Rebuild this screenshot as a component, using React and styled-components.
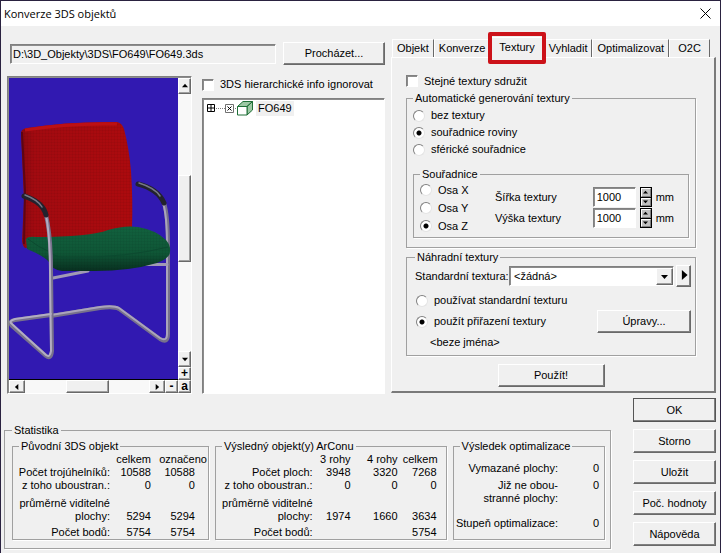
import React, { useState } from 'react';
import styled, { createGlobalStyle, css } from 'styled-components';

const GlobalStyle = createGlobalStyle`
  * {
    box-sizing: border-box;
  }

  body {
    margin: 0;
    background: #f0f0f0;
    color: #000;
    font: 11px/13px "Liberation Sans", Arial, sans-serif;
  }

  button,
  input,
  select {
    margin: 0;
    padding: 0;
    border-radius: 0;
    color: inherit;
    font: inherit;
  }
`;

const sunken = css`
  border: 1px solid;
  border-color: #808080 #fff #fff #808080;
  box-shadow: inset 1px 1px 0 #8c8c8c;
`;

const raised = css`
  border: 1px solid;
  border-color: #fff #696969 #696969 #fff;
  box-shadow: inset -1px -1px 0 #a0a0a0;
  background: #f0f0f0;
`;

const Window = styled.div`
  display: flex;
  flex-direction: column;
  min-height: 100vh;
  border: solid #2a2240;
  border-width: 1px 1px 0;
`;

const TitleBar = styled.header`
  display: flex;
  align-items: center;
  justify-content: space-between;
  height: 25px;
  padding: 0 8px 0 3px;
  background: #fff;
`;

const Title = styled.h1`
  margin: 0;
  font: 11px/16px "Open Sans", "Segoe UI", sans-serif;
`;

const CloseButton = styled.button`
  display: flex;
  border: none;
  background: none;
`;

const Body = styled.div`
  padding: 0 4px 0 3px;
`;

const Main = styled.main`
  display: flex;
  gap: 6px;
  padding: 13px 0 0 3px;
`;

const Source = styled.section`
  display: flex;
  flex: 1;
  flex-direction: column;
  gap: 11px;
  min-width: 0;
  padding-top: 3px;
`;

const FileRow = styled.div`
  display: flex;
  align-items: center;
  gap: 7px;
  padding-left: 3px;
`;

const PathInput = styled.input`
  ${sunken}
  flex: 1;
  min-width: 0;
  height: 20px;
  padding-left: 2px;
  background: #f0f0f0;
`;

const Button = styled.button`
  ${raised}
  width: ${({ $width }) => $width || 'auto'};
  height: ${({ $height }) => $height || 23}px;
  box-shadow: inset -1px -1px 0 #808080;
  outline: ${({ $primary }) => ($primary ? '1px solid #555' : 'none')};
  outline-offset: -1px;
`;

const SourceColumns = styled.div`
  display: flex;
  flex: 1;
  gap: 10px;
`;

const Preview = styled.div`
  ${sunken}
  display: grid;
  grid-template-rows: 1fr 13px;
  grid-template-columns: 1fr 13px;
  width: 185px;
  padding: 1px 0 0 1px;
  background: #f8f8f8;
`;

const Scene = styled.svg`
  width: 100%;
  height: 100%;
  border-bottom: 1px solid #000;
  background: #3119b1;
`;

const ScrollBar = styled.div`
  display: flex;
  flex-direction: ${({ $vertical }) => ($vertical ? 'column' : 'row')};
  background: #f8f8f8;
`;

const ScrollButton = styled.button`
  ${raised}
  display: flex;
  flex: 0 0 ${({ $size }) => $size}px;
  align-items: center;
  justify-content: center;
  min-height: 0;
  font-weight: bold;
  font-size: 12px;
  line-height: 9px;
`;

const ScrollThumb = styled.div`
  ${raised}
  flex: 0 0 ${({ $size }) => $size}px;
`;

const ScrollSpace = styled.div`
  flex: ${({ $share }) => $share || 1};
`;

const TreeColumn = styled.div`
  display: flex;
  flex: 1;
  flex-direction: column;
  gap: 5px;
`;

const CheckLabel = styled.label`
  display: flex;
  align-items: center;
  gap: 6px;
  height: ${({ $height }) => $height || 17}px;
`;

const CheckInput = styled.input`
  ${sunken}
  width: 12px;
  height: 12px;
  appearance: none;
  background: #fff;

  &:checked {
    background: #404040;
  }
`;

const Tree = styled.div`
  ${sunken}
  flex: 1;
  padding: 1px 4px;
  background: #fff;
`;

const TreeRow = styled.div`
  display: flex;
  align-items: center;
  height: 16px;
`;

const TreeText = styled.span`
  margin-left: 3px;
  padding: 1px 2px;
  background: #f0f0f0;
`;

const Settings = styled.section`
  flex: 0 0 325px;
  min-width: 0;
`;

const TabList = styled.div`
  display: flex;
  height: 18px;
  padding-left: 1px;
`;

const Tab = styled.button`
  position: relative;
  min-width: 41px;
  padding: 0 4px;
  border: 1px solid;
  border-color: #fff #696969 transparent #fff;
  border-bottom: none;
  background: #f0f0f0;
  white-space: nowrap;

  ${({ $active }) => $active
    && css`
      z-index: 1;
      margin: -2px 0 -1px;
      padding: 0 8px 2px;
    `}
`;

const TabMarker = styled.span`
  position: absolute;
  inset: -6px -3px -6px -3px;
  border: 4px solid #cc1219;
  border-radius: 2px;
`;

const TabPanel = styled.div`
  display: flex;
  flex-direction: column;
  padding: 15px 18px 4px 14px;
  border: solid;
  border-width: 1px 2px 2px 1px;
  border-color: #fff #7a7a7a #7a7a7a #fff;
`;

const Group = styled.fieldset`
  min-width: 0;
  margin: 0;
  padding: ${({ $padding }) => $padding || 0};
  border: 1px solid #a0a0a0;
  box-shadow: 1px 1px 0 #fff;
`;

const Legend = styled.legend`
  margin-left: ${({ $indent }) => $indent || 0}px;
  padding: 0 2px;
`;

const PanelGroup = styled(Group)`
  margin-top: 3px;
`;

const AxisGroup = styled(Group)`
  display: flex;
  margin-top: 10px;
`;

const RadioLabel = styled.label`
  display: flex;
  align-items: center;
  gap: 6px;
  height: ${({ $height }) => $height || 17}px;
`;

const RadioInput = styled.input`
  width: 12px;
  height: 12px;
  border: 1px solid;
  border-color: #808080 #e4e4e4 #e4e4e4 #808080;
  border-radius: 50%;
  appearance: none;
  background: #fff;

  &:checked {
    background: radial-gradient(circle, #000 2px, #fff 3px);
  }
`;

const AxisRadios = styled.div`
  width: 75px;
`;

const Sizes = styled.div`
  display: flex;
  flex: 1;
  flex-direction: column;
  gap: 1px;
  padding-top: 6px;
`;

const SizeRow = styled.div`
  display: flex;
  align-items: center;
  gap: 4px;
  height: 20px;
`;

const SizeLabel = styled.label`
  flex: 1;
`;

const SizeInput = styled.input`
  ${sunken}
  width: 43px;
  height: 20px;
  padding-left: 3px;
  background: #fff;
`;

const Spinner = styled.div`
  display: flex;
  flex-direction: column;
  width: 12px;
  height: 20px;
  border: 1px solid #000;
  background: #000;
  gap: 1px;
`;

const SpinButton = styled.button`
  display: flex;
  flex: 1;
  align-items: center;
  justify-content: center;
  min-height: 0;
  border: 1px solid;
  border-color: #fff #808080 #808080 #fff;
  background: #c0c0c0;
`;

const TextureRow = styled.div`
  display: flex;
  align-items: center;
  gap: 2px;
  height: 22px;
`;

const TextureLabel = styled.label`
  width: 92px;
  white-space: nowrap;
`;

const SelectBox = styled.div`
  display: grid;
  flex: 1;
  height: 20px;
`;

const Select = styled.select`
  ${sunken}
  grid-area: 1 / 1;
  width: 100%;
  padding: 0 4px;
  appearance: none;
  background: #fff;
`;

const SelectArrow = styled.span`
  ${raised}
  display: flex;
  grid-area: 1 / 1;
  align-items: center;
  justify-content: center;
  justify-self: end;
  width: 17px;
  margin: 2px 1px 1px;
  pointer-events: none;
`;

const ReplaceOptions = styled.div`
  padding: 5px 0 0 1px;
`;

const AssignRow = styled.div`
  display: flex;
  align-items: center;
  justify-content: space-between;
  margin-top: 1px;
`;

const TextureName = styled.p`
  margin: 3px 0 0 14px;
`;

const ApplyRow = styled.div`
  display: flex;
  justify-content: center;
  padding-top: 8px;
`;

const Footer = styled.footer`
  display: flex;
  align-items: flex-start;
  gap: 22px;
  padding-top: 4px;
`;

const Statistics = styled(Group)`
  display: flex;
  flex: 1;
  gap: 6px;
  margin-top: 26px;
`;

const StatGroup = styled(Group)`
  flex: ${({ $grow }) => $grow} 1 0;
`;

const StatTable = styled.table`
  width: 100%;
  border-collapse: collapse;
  table-layout: fixed;
  text-align: right;

  th,
  td {
    height: 13px;
    padding: 0;
    font-weight: normal;
    white-space: nowrap;
  }
`;

const StatCol = styled.col`
  width: ${({ $width }) => $width}px;
`;

const StatRow = styled.tr`
  th,
  td {
    padding-top: ${({ $gap }) => $gap || 0}px;
    vertical-align: ${({ $top }) => ($top ? 'top' : 'bottom')};
  }

  td:last-child {
    padding-right: ${({ $end }) => $end || 0}px;
  }
`;

const Actions = styled.div`
  display: flex;
  flex: 0 0 83px;
  flex-direction: column;
  gap: 7px;
`;

const Arrow = ({ dir, size = 7 }) => {
  const points = {
    up: '0,5 3.5,1 7,5',
    down: '0,2 3.5,6 7,2',
    left: '5,0 1,3.5 5,7',
    right: '2,0 6,3.5 2,7',
  };

  return (
    <svg width={size} height={size} viewBox="0 0 7 7" aria-hidden="true">
      <polygon points={points[dir]} />
    </svg>
  );
};

const Chair = () => (
  <Scene viewBox="9 77 169 301" preserveAspectRatio="xMidYMid slice" role="img" aria-label="FO649">
    <defs>
      <linearGradient id="back" x1="0" y1="0" x2="1" y2="0">
        <stop offset="0" stopColor="#8c0810" />
        <stop offset="0.12" stopColor="#a20a10" />
        <stop offset="1" stopColor="#ac0a0e" />
      </linearGradient>
      <linearGradient id="seat" x1="0" y1="0" x2="0" y2="1">
        <stop offset="0" stopColor="#12613e" />
        <stop offset="0.6" stopColor="#0f5636" />
        <stop offset="1" stopColor="#083020" />
      </linearGradient>
      <pattern id="weave" width="3" height="3" patternUnits="userSpaceOnUse">
        <path d="M0 .5H3M.5 0V3" stroke="#000" strokeOpacity=".04" />
      </pattern>
    </defs>
    <g fill="none" strokeLinecap="round" strokeLinejoin="round">
      <path d="M51 315L100 307Q114 305 119 308L160 338Q168 343 168 333V245Q168 214 164 202" stroke="#77718c" strokeWidth="4" />
      <path d="M51 314L100 306Q114 304 119 307L160 337Q167 341 167 333V245Q167 214 163 202" stroke="#aaa4bb" strokeWidth="2" />
      <path d="M53 277L88 270M140 263.5H167" stroke="#a09ab4" strokeWidth="3" />
      <path d="M138 183Q158 188 164 202" stroke="#22222d" strokeWidth="5" />
      <path d="M139 182Q155 187 160 195" stroke="#777886" strokeWidth="1.5" />
    </g>
    <path d="M21 132Q21 128 27 127Q70 120 117 121Q122 122 124 128Q129 147 131 170Q133 200 132 227L95 238L25 247Q22 244 22 239L24 200Z" fill="url(#back)" />
    <path d="M21 132Q21 128 27 127Q70 120 117 121Q122 122 124 128Q129 147 131 170Q133 200 132 227L95 238L25 247Q22 244 22 239L24 200Z" fill="url(#weave)" />
    <path d="M22 131L25 190L24 243" fill="none" stroke="#5c0614" strokeWidth="2" />
    <path d="M25 129Q70 122 117 123" fill="none" stroke="#bc1014" strokeWidth="3" />
    <path d="M26 238Q28 235 36 236Q90 236 108 229Q125 224 138 226Q156 229 166 239Q171 245 170 251Q170 257 157 262Q130 270 95 270L62 270Q52 269 49 261Q44 255 27 248Z" fill="url(#seat)" />
    <path d="M26 238Q28 235 36 236Q90 236 108 229Q125 224 138 226Q156 229 166 239Q171 245 170 251Q170 257 157 262Q130 270 95 270L62 270Q52 269 49 261Q44 255 27 248Z" fill="url(#weave)" />
    <path d="M28 238Q38 246 50 251Q56 257 70 257Q130 256 168 246" fill="none" stroke="#0c4a30" />
    <g fill="none" strokeLinecap="round" strokeLinejoin="round">
      <path d="M46 214Q51 235 51 270L52 350Q51 359 46 355L12 325Q8 320 15 319L51 314" stroke="#77718c" strokeWidth="4" />
      <path d="M46 214Q50 235 50 270L51 350Q50 357 46 354L12 323Q8 320 15 318L51 313" stroke="#b2adc2" strokeWidth="2" />
      <path d="M24 195Q43 201 46 214" stroke="#22222d" strokeWidth="5" />
      <path d="M25 194Q38 199 42 206" stroke="#777886" strokeWidth="1.5" />
    </g>
  </Scene>
);

const TreeIcons = () => (
  <svg width="46" height="16" viewBox="0 0 46 16" fill="none" stroke="#000" aria-hidden="true">
    <path d="M.5 4.5h7v7h-7zM1 8h6M4 5v6" />
    <path d="M9 8.5H18M28 8.5H31" strokeDasharray="1 1" stroke="#808080" />
    <path d="M18.5 4.5h8v8h-8z" stroke="#707070" />
    <path d="M20.5 6.5l4 4M24.5 6.5l-4 4" />
    <path d="M30.5 6.500L36 1.5H45.5L40 6.5zM40 6.5L45.5 1.5V10L40 15z" fill="#9cc8a4" stroke="#1f6f37" />
    <path d="M30.5 6.5H40V15H30.5z" fill="#fff" stroke="#1f6f37" />
  </svg>
);

const Radio = ({ name, label, value, selected, onChange, height }) => (
  <RadioLabel $height={height}>
    <RadioInput
      type="radio"
      name={name}
      checked={selected === value}
      onChange={() => onChange(value)}
    />
    {label}
  </RadioLabel>
);

const SizeField = ({ id, label }) => {
  const [value, setValue] = useState(1000);

  return (
    <SizeRow>
      <SizeLabel htmlFor={id}>{label}</SizeLabel>
      <SizeInput id={id} value={value} onChange={(e) => setValue(Number(e.target.value) || 0)} />
      <Spinner>
        <SpinButton type="button" aria-label="+" onClick={() => setValue(value + 1)}>
          <Arrow dir="up" size={5} />
        </SpinButton>
        <SpinButton type="button" aria-label="-" onClick={() => setValue(value - 1)}>
          <Arrow dir="down" size={5} />
        </SpinButton>
      </Spinner>
      <span>mm</span>
    </SizeRow>
  );
};

const tabs = ['Objekt', 'Konverze', 'Textury', 'Vyhladit', 'Optimalizovat', 'O2C'];

const generation = ['bez textury', 'souřadnice roviny', 'sférické souřadnice'];

const axes = ['Osa X', 'Osa Y', 'Osa Z'];

const actions = ['OK', 'Storno', 'Uložit', 'Poč. hodnoty', 'Nápověda'];

const stats = [
  {
    title: 'Původní 3DS objekt',
    grow: 197,
    cols: [41, 57],
    head: ['celkem', 'označeno'],
    headEnd: 1,
    end: 13,
    rows: [
      { label: 'Počet trojúhelníků:', values: ['10588', '10588'] },
      { label: 'z toho uboustran.:', values: ['0', '0'] },
      { label: 'průměrně viditelné', values: ['', ''], gap: 5 },
      { label: 'plochy:', values: ['5294', '5294'] },
      { label: 'Počet bodů:', values: ['5754', '5754'], gap: 3 },
    ],
  },
  {
    title: 'Výsledný objekt(y) ArConu',
    grow: 232,
    cols: [38, 47, 48],
    head: ['3 rohy', '4 rohy', 'celkem'],
    headEnd: 8,
    end: 9,
    rows: [
      { label: 'Počet ploch:', values: ['3948', '3320', '7268'] },
      { label: 'z toho oboustran.:', values: ['0', '0', '0'] },
      { label: 'průměrně viditelné', values: ['', '', ''], gap: 5 },
      { label: 'plochy:', values: ['1974', '1660', '3634'] },
      { label: 'Počet bodů:', values: ['', '', '5754'], gap: 3 },
    ],
  },
  {
    title: 'Výsledek optimalizace',
    grow: 152,
    cols: [46],
    end: 5,
    rows: [
      { label: 'Vymazané plochy:', values: ['0'], gap: 9 },
      { label: <>Již ne obou-<br />stranné plochy:</>, values: ['0'], gap: 4, top: true },
      { label: 'Stupeň optimalizace:', values: ['0'], gap: 12 },
    ],
  },
];

const StatBlock = ({ title, grow, cols, head, headEnd, end, rows }) => (
  <StatGroup $grow={grow}>
    <Legend $indent={6}>{title}</Legend>
    <StatTable>
      <colgroup>
        <col />
        {cols.map((w, i) => (
          <StatCol key={i} $width={w} />
        ))}
      </colgroup>
      <tbody>
        {head && (
          <StatRow $end={headEnd}>
            <td />
            {head.map((h) => (
              <td key={h}>{h}</td>
            ))}
          </StatRow>
        )}
        {rows.map((row, i) => (
          <StatRow key={i} $gap={row.gap} $top={row.top} $end={end}>
            <th scope="row">{row.label}</th>
            {row.values.map((v, n) => (
              <td key={n}>{v}</td>
            ))}
          </StatRow>
        ))}
      </tbody>
    </StatTable>
  </StatGroup>
);

const App = () => {
  const [tab, setTab] = useState('Textury');
  const [mode, setMode] = useState('souřadnice roviny');
  const [axis, setAxis] = useState('Osa Z');
  const [replace, setReplace] = useState('assign');

  return (
    <Window>
      <GlobalStyle />
      <TitleBar>
        <Title>Konverze 3DS objektů</Title>
        <CloseButton type="button" aria-label="Zavřít">
          <svg width="13" height="11" viewBox="0 0 13 11" stroke="#000" aria-hidden="true">
            <path d="M1.5 .5l10 10M11.5 .5l-10 10" />
          </svg>
        </CloseButton>
      </TitleBar>
      <Body>
        <Main>
          <Source>
            <FileRow>
              <PathInput readOnly aria-label="Soubor" value="D:\3D_Objekty\3DS\FO649\FO649.3ds" />
              <Button type="button" $width="102px">Procházet...</Button>
            </FileRow>
            <SourceColumns>
              <Preview>
                <Chair />
                <ScrollBar $vertical>
                  <ScrollButton type="button" $size={16} aria-label="Nahoru"><Arrow dir="up" size={6} /></ScrollButton>
                  <ScrollSpace $share={82} />
                  <ScrollThumb $size={87} />
                  <ScrollSpace $share={90} />
                  <ScrollButton type="button" $size={16} aria-label="Dolů"><Arrow dir="down" size={6} /></ScrollButton>
                  <ScrollButton type="button" $size={13}>+</ScrollButton>
                </ScrollBar>
                <ScrollBar>
                  <ScrollButton type="button" $size={16} aria-label="Vlevo"><Arrow dir="left" size={6} /></ScrollButton>
                  <ScrollSpace />
                  <ScrollThumb $size={43} />
                  <ScrollSpace />
                  <ScrollButton type="button" $size={16} aria-label="Vpravo"><Arrow dir="right" size={6} /></ScrollButton>
                  <ScrollButton type="button" $size={13}>-</ScrollButton>
                </ScrollBar>
                <ScrollButton type="button" $size={13}>a</ScrollButton>
              </Preview>
              <TreeColumn>
                <CheckLabel>
                  <CheckInput type="checkbox" />
                  3DS hierarchické info ignorovat
                </CheckLabel>
                <Tree>
                  <TreeRow>
                    <TreeIcons />
                    <TreeText>FO649</TreeText>
                  </TreeRow>
                </Tree>
              </TreeColumn>
            </SourceColumns>
          </Source>

          <Settings>
            <TabList role="tablist">
              {tabs.map((t) => (
                <Tab
                  key={t}
                  type="button"
                  role="tab"
                  aria-selected={t === tab}
                  $active={t === tab}
                  onClick={() => setTab(t)}
                >
                  {t}
                  {t === 'Textury' && <TabMarker />}
                </Tab>
              ))}
            </TabList>
            <TabPanel role="tabpanel">
              <CheckLabel $height={16}>
                <CheckInput type="checkbox" />
                Stejné textury sdružit
              </CheckLabel>

              <PanelGroup $padding="2px 6px 9px">
                <Legend>Automatické generování textury</Legend>
                {generation.map((g) => (
                  <Radio key={g} name="mode" label={g} value={g} selected={mode} onChange={setMode} />
                ))}
                <AxisGroup $padding="0 14px 2px 6px">
                  <Legend>Souřadnice</Legend>
                  <AxisRadios>
                    {axes.map((a) => (
                      <Radio key={a} name="axis" label={a} value={a} selected={axis} onChange={setAxis} height={18} />
                    ))}
                  </AxisRadios>
                  <Sizes>
                    <SizeField id="width" label="Šířka textury" />
                    <SizeField id="height" label="Výška textury" />
                  </Sizes>
                </AxisGroup>
              </PanelGroup>

              <PanelGroup $padding="1px 4px 6px 8px">
                <Legend>Náhradní textury</Legend>
                <TextureRow>
                  <TextureLabel htmlFor="texture">Standardní textura:</TextureLabel>
                  <SelectBox>
                    <Select id="texture">
                      <option>&lt;žádná&gt;</option>
                    </Select>
                    <SelectArrow><Arrow dir="down" /></SelectArrow>
                  </SelectBox>
                  <Button type="button" $width="15px" $height={22} aria-label="Vybrat">
                    <Arrow dir="right" size={10} />
                  </Button>
                </TextureRow>
                <ReplaceOptions>
                  <Radio name="replace" label="používat standardní texturu" value="standard" selected={replace} onChange={setReplace} />
                  <AssignRow>
                    <Radio name="replace" label="použít přiřazení textury" value="assign" selected={replace} onChange={setReplace} />
                    <Button type="button" $width="94px">Úpravy...</Button>
                  </AssignRow>
                  <TextureName>&lt;beze jména&gt;</TextureName>
                </ReplaceOptions>
              </PanelGroup>

              <ApplyRow>
                <Button type="button" $width="107px">Použít!</Button>
              </ApplyRow>
            </TabPanel>
          </Settings>
        </Main>

        <Footer>
          <Statistics $padding="3px 5px 8px 7px">
            <Legend>Statistika</Legend>
            {stats.map((s) => (
              <StatBlock key={s.title} {...s} />
            ))}
          </Statistics>
          <Actions>
            {actions.map((a) => (
              <Button key={a} type="button" $height={24} $primary={a === 'OK'}>{a}</Button>
            ))}
          </Actions>
        </Footer>
      </Body>
    </Window>
  );
};

export default App;
